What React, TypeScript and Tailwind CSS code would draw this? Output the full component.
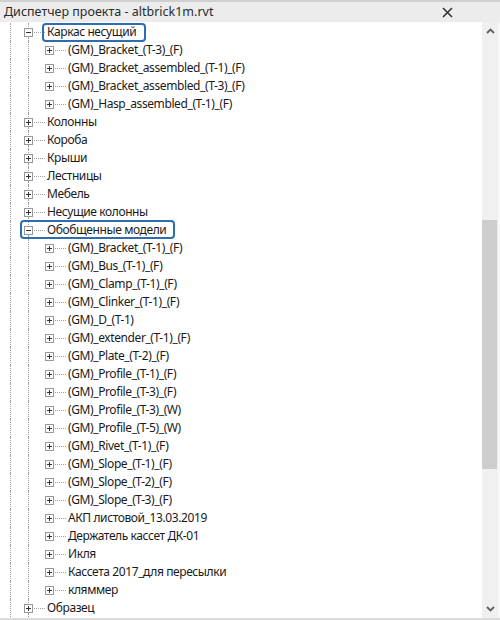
import React from "react";

type Row = { level: 1 | 2; text: string; expanded?: boolean; hl?: 1 | 2 };

const rows: Row[] = [
  { level: 1, text: "Каркас несущий", expanded: true, hl: 1 },
  { level: 2, text: "(GM)_Bracket_(T-3)_(F)" },
  { level: 2, text: "(GM)_Bracket_assembled_(T-1)_(F)" },
  { level: 2, text: "(GM)_Bracket_assembled_(T-3)_(F)" },
  { level: 2, text: "(GM)_Hasp_assembled_(T-1)_(F)" },
  { level: 1, text: "Колонны" },
  { level: 1, text: "Короба" },
  { level: 1, text: "Крыши" },
  { level: 1, text: "Лестницы" },
  { level: 1, text: "Мебель" },
  { level: 1, text: "Несущие колонны" },
  { level: 1, text: "Обобщенные модели", expanded: true, hl: 2 },
  { level: 2, text: "(GM)_Bracket_(T-1)_(F)" },
  { level: 2, text: "(GM)_Bus_(T-1)_(F)" },
  { level: 2, text: "(GM)_Clamp_(T-1)_(F)" },
  { level: 2, text: "(GM)_Clinker_(T-1)_(F)" },
  { level: 2, text: "(GM)_D_(T-1)" },
  { level: 2, text: "(GM)_extender_(T-1)_(F)" },
  { level: 2, text: "(GM)_Plate_(T-2)_(F)" },
  { level: 2, text: "(GM)_Profile_(T-1)_(F)" },
  { level: 2, text: "(GM)_Profile_(T-3)_(F)" },
  { level: 2, text: "(GM)_Profile_(T-3)_(W)" },
  { level: 2, text: "(GM)_Profile_(T-5)_(W)" },
  { level: 2, text: "(GM)_Rivet_(T-1)_(F)" },
  { level: 2, text: "(GM)_Slope_(T-1)_(F)" },
  { level: 2, text: "(GM)_Slope_(T-2)_(F)" },
  { level: 2, text: "(GM)_Slope_(T-3)_(F)" },
  { level: 2, text: "АКП листовой_13.03.2019" },
  { level: 2, text: "Держатель кассет ДК-01" },
  { level: 2, text: "Икля" },
  { level: 2, text: "Кассета 2017_для пересылки" },
  { level: 2, text: "кляммер" },
  { level: 1, text: "Образец" },
];

function Expander({ expanded }: { expanded?: boolean }) {
  return (
    <svg width="9" height="9" viewBox="0 0 9 9" className="shrink-0 block">
      <rect x="0.5" y="0.5" width="8" height="8" fill="#fff" stroke="#989898" />
      <line x1="2" y1="4.5" x2="7" y2="4.5" stroke="#333" />
      {!expanded && <line x1="4.5" y1="2" x2="4.5" y2="7" stroke="#333" />}
    </svg>
  );
}

function VLine() {
  return <div className="h-full w-0 border-l border-dotted border-[#a0a0a0]" />;
}

function TreeRow({ row }: { row: Row }) {
  return (
    <div className="relative flex h-[18px] items-center">
      <div className="flex h-full w-[19px] shrink-0 pl-[10px]">
        <VLine />
      </div>
      {row.level === 2 && (
        <div className="flex h-full w-[21px] shrink-0 pl-[9px]">
          <VLine />
        </div>
      )}
      <div className="flex shrink-0 pl-[5px] items-center">
        <Expander expanded={row.expanded} />
        <div className="ml-[1px] w-[11px] border-t border-dotted border-[#a0a0a0]" />
      </div>
      <span className="ml-[2px] whitespace-nowrap text-[12px] leading-[18px] tracking-[-0.4px] text-[#1a1a1a]">
        {row.text}
      </span>
      {row.level === 1 && (
        <div className="absolute left-[28px] top-0 h-full w-0">
          <div className="absolute left-0 top-0 h-[4px] border-l border-dotted border-[#a0a0a0]" />
          <div className="absolute left-0 top-[14px] h-[4px] border-l border-dotted border-[#a0a0a0]" />
        </div>
      )}
      {row.hl === 1 && (
        <div className="pointer-events-none absolute left-[42px] top-0 h-[19px] w-[104px] rounded-[4px] border-2 border-[#2f6db3]" />
      )}
      {row.hl === 2 && (
        <div className="pointer-events-none absolute left-[20px] top-[-1px] h-[19px] w-[155px] rounded-[4px] border-2 border-[#2f6db3]" />
      )}
    </div>
  );
}

export default function App() {
  return (
    <div
      className="flex h-[620px] w-[500px] flex-col overflow-hidden bg-white"
      style={{ fontFamily: '"Noto Sans", "Open Sans", sans-serif' }}
    >
      <div className="flex h-[22px] shrink-0 items-center justify-between border-t-2 border-[#d0d0d0] bg-[#ececec] pl-[4px] pr-[47px]">
        <span className="text-[12.5px] leading-none text-[#2b2b2b]">Диспетчер проекта - altbrick1m.rvt</span>
        <svg width="11" height="11" viewBox="0 0 11 11">
          <path d="M1 1 L10 10 M10 1 L1 10" stroke="#333" strokeWidth="1.6" />
        </svg>
      </div>
      <div className="flex min-h-0 flex-1 border-b-2 border-[#dcdcdc]">
        <div className="min-w-0 flex-1 overflow-hidden pt-[1px]">
          {rows.map((r, i) => (
            <TreeRow key={i} row={r} />
          ))}
        </div>
        <div className="flex w-[16px] shrink-0 flex-col items-center bg-[#f0f0f0]">
          <div className="flex h-[18px] w-full items-center justify-center">
            <svg width="9" height="6" viewBox="0 0 9 6">
              <path d="M1 5 L4.5 1.5 L8 5" fill="none" stroke="#606060" strokeWidth="1.8" />
            </svg>
          </div>
          <div className="h-[180px] w-full" />
          <div className="h-[249px] w-[15px] self-start bg-[#cdcdcd]" />
          <div className="flex-1" />
          <div className="flex h-[18px] w-full items-center justify-center">
            <svg width="9" height="6" viewBox="0 0 9 6">
              <path d="M1 1 L4.5 4.5 L8 1" fill="none" stroke="#606060" strokeWidth="1.8" />
            </svg>
          </div>
        </div>
        <div className="w-[2px] shrink-0 bg-[#f7f7f7]" />
      </div>
    </div>
  );
}
